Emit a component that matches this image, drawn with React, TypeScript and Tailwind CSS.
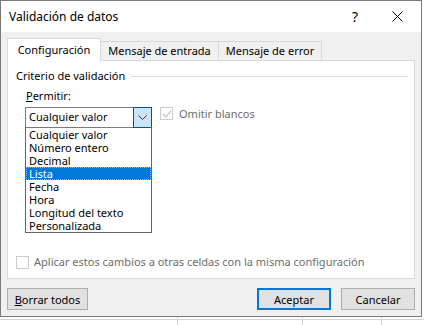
import React from "react";

const items = [
  "Cualquier valor",
  "Número entero",
  "Decimal",
  "Lista",
  "Fecha",
  "Hora",
  "Longitud del texto",
  "Personalizada",
];

export default function App() {
  return (
    <div
      className="relative w-[424px] h-[325px] bg-white overflow-hidden text-[11px] text-black"
      style={{ fontFamily: '"Noto Sans", "Open Sans", sans-serif' }}
    >
      {/* spreadsheet grid behind */}
      <div className="absolute left-[177px] top-0 w-px h-full bg-[#d4d4d4]" />
      <div className="absolute left-[302px] top-0 w-px h-full bg-[#d4d4d4]" />
      <div className="absolute left-[381px] top-0 w-px h-full bg-[#d4d4d4]" />
      <div className="absolute left-0 top-[319px] w-full h-px bg-[#d4d4d4]" />

      {/* dialog window */}
      <div className="absolute left-0 top-0 w-[422px] h-[317px] border border-[#7a7a7a] bg-[#f0f0f0] flex flex-col">
        {/* title bar */}
        <div className="h-[31px] bg-white flex items-center pl-[8px] shrink-0">
          <span className="flex-1 text-[12px] leading-none">Validación de datos</span>
          <span className="w-[40px] text-center text-[14px] leading-none mr-[4px]">?</span>
          <span className="w-[36px] flex justify-center mr-[6px]">
            <svg width="11" height="11" viewBox="0 0 11 11">
              <path d="M0.5 0.5 L10.5 10.5 M10.5 0.5 L0.5 10.5" stroke="#000" strokeWidth="1" />
            </svg>
          </span>
        </div>

        {/* tabs */}
        <div className="flex items-end pl-[6px] pt-[6px] h-[29px] shrink-0">
          <div className="relative z-10 w-[94px] h-[23px] bg-white border border-[#d9d9d9] border-b-0 flex items-center justify-center">
            Configuración
          </div>
          <div className="w-[118px] h-[20px] bg-[#f0f0f0] border border-[#d9d9d9] border-l-0 border-b-0 flex items-center justify-center">
            Mensaje de entrada
          </div>
          <div className="w-[103px] h-[20px] bg-[#f0f0f0] border border-[#d9d9d9] border-l-0 border-b-0 flex items-center justify-center">
            Mensaje de error
          </div>
        </div>

        {/* panel */}
        <div className="mx-[6px] -mt-px h-[219px] bg-white border border-[#d9d9d9] relative flex flex-col pl-[8px] pr-[6px]">
          <div className="flex items-center h-[14px] mt-[8px]">
            <span>Criterio de validación</span>
            <div className="flex-1 h-px bg-[#dcdcdc] ml-[6px]" />
          </div>
          <div className="mt-[6px] ml-[10px] h-[14px] flex items-center">
            <span>
              <span className="underline">P</span>ermitir:
            </span>
          </div>
          <div className="flex ml-[9px] mt-[4px]">
            <div className="flex flex-col w-[127px]">
              <div className="h-[21px] border border-[#7a7a7a] flex items-stretch">
                <span className="flex-1 pl-[3px] flex items-center">Cualquier valor</span>
                <span className="w-[19px] bg-[#cce4f7] border border-[#005499] -my-px -mr-px flex items-center justify-center">
                  <svg width="9" height="5" viewBox="0 0 9 5">
                    <path d="M0.5 0.5 L4.5 4.5 L8.5 0.5" stroke="#333" strokeWidth="1" fill="none" />
                  </svg>
                </span>
              </div>
              <div className="border border-[#646464] border-t-0 -mt-px pt-px flex flex-col">
                {items.map((t) =>
                  t === "Lista" ? (
                    <div
                      key={t}
                      className="h-[13px] leading-[11px] bg-[#0078d7] text-white border border-dotted border-[#f0a050] pl-[2px]"
                    >
                      {t}
                    </div>
                  ) : (
                    <div key={t} className="h-[13px] leading-[13px] pl-[3px]">
                      {t}
                    </div>
                  )
                )}
              </div>
            </div>
            <div className="flex items-start ml-[8px]">
              <div className="w-[13px] h-[13px] border border-[#cccccc] flex items-center justify-center">
                <svg width="10" height="8" viewBox="0 0 10 8">
                  <path d="M0.8 4 L3.6 6.8 L9.2 0.8" stroke="#bfbfbf" strokeWidth="1.2" fill="none" />
                </svg>
              </div>
              <span className="ml-[6px] text-[#6d6d6d] leading-[13px]">Omitir blancos</span>
            </div>
          </div>
          <div className="flex items-center mt-[21px]">
            <div className="w-[13px] h-[13px] border border-[#cccccc]" />
            <span className="ml-[5px] text-[#6d6d6d]">
              Aplicar estos cambios a otras celdas con la misma configuración
            </span>
          </div>
        </div>

        {/* buttons */}
        <div className="flex items-center px-[6px] mt-[9px]">
          <button className="w-[81px] h-[22px] bg-[#e1e1e1] border border-[#adadad] text-[11px] leading-none">
            <span className="underline">B</span>orrar todos
          </button>
          <div className="flex-1" />
          <button className="w-[74px] h-[22px] bg-[#e1e1e1] border-2 border-[#0078d7] text-[11px] leading-none">
            Aceptar
          </button>
          <button className="w-[74px] h-[22px] ml-[10px] bg-[#e1e1e1] border border-[#adadad] text-[11px] leading-none">
            Cancelar
          </button>
        </div>
      </div>
    </div>
  );
}
